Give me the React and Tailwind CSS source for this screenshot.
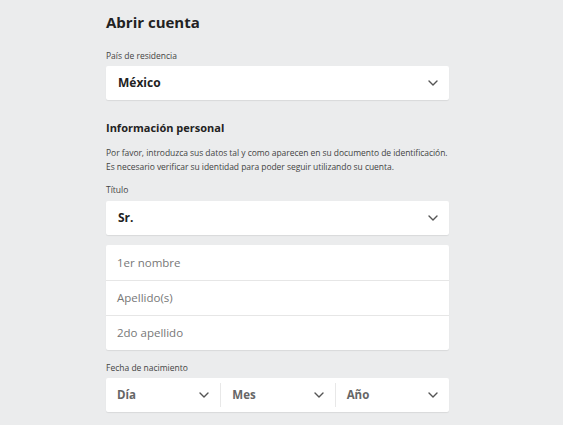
function Chevron() {
  return (
    <svg width="10" height="6" viewBox="0 0 10 6" fill="none" className="shrink-0">
      <path d="M1 1l4 4 4-4" stroke="#555" strokeWidth="1.4" strokeLinecap="round" strokeLinejoin="round" />
    </svg>
  );
}

function SelectBox({ value }) {
  return (
    <div className="flex h-[34px] items-center justify-between rounded-[2px] bg-white pl-[12px] pr-[11px] shadow-[0_1px_1px_rgba(0,0,0,0.08)]">
      <span className="text-[12px] font-bold text-[#222]">{value}</span>
      <Chevron />
    </div>
  );
}

function Label({ children }) {
  return <div className="text-[8.5px] leading-[12px] text-[#444]">{children}</div>;
}

export default function App() {
  const fields = ["1er nombre", "Apellido(s)", "2do apellido"];
  const dates = ["Día", "Mes", "Año"];

  return (
    <div className="min-h-[425px] bg-[#ebeced] pl-[106px] pt-[12px] font-['Open_Sans',sans-serif]">
      <div className="w-[343px]">
        <h1 className="text-[15px] font-bold leading-[20px] text-[#222]">Abrir cuenta</h1>

        <div className="mt-[18px]">
          <Label>País de residencia</Label>
        </div>
        <div className="mt-[4px]">
          <SelectBox value="México" />
        </div>

        <h2 className="mt-[21px] text-[11px] font-bold leading-[14px] text-[#222]">Información personal</h2>
        <p className="mt-[11px] whitespace-nowrap text-[8.5px] leading-[14px] tracking-[-0.05px] text-[#444]">
          Por favor, introduzca sus datos tal y como aparecen en su documento de identificación.
          <br />
          Es necesario verificar su identidad para poder seguir utilizando su cuenta.
        </p>

        <div className="mt-[10px]">
          <Label>Título</Label>
        </div>
        <div className="mt-[5px]">
          <SelectBox value="Sr." />
        </div>

        <div className="mt-[10px] rounded-[2px] bg-white shadow-[0_1px_1px_rgba(0,0,0,0.08)]">
          {fields.map((f, i) => (
            <div
              key={f}
              className={`flex h-[35px] items-center pl-[11px] text-[11.5px] text-[#777] ${i > 0 ? "border-t border-[#e6e6e6]" : ""}`}
            >
              {f}
            </div>
          ))}
        </div>

        <div className="mt-[12px]">
          <Label>Fecha de nacimiento</Label>
        </div>
        <div className="mt-[4px] flex h-[34px] items-center rounded-[2px] bg-white shadow-[0_1px_1px_rgba(0,0,0,0.08)]">
          {dates.map((d, i) => (
            <div key={d} className="flex flex-1 items-center">
              {i > 0 && <div className="h-[24px] w-px bg-[#e8e8e8]" />}
              <div className="flex flex-1 items-center justify-between pl-[11px] pr-[11px]">
                <span className="text-[11.5px] font-bold text-[#666]">{d}</span>
                <Chevron />
              </div>
            </div>
          ))}
        </div>
      </div>
    </div>
  );
}
